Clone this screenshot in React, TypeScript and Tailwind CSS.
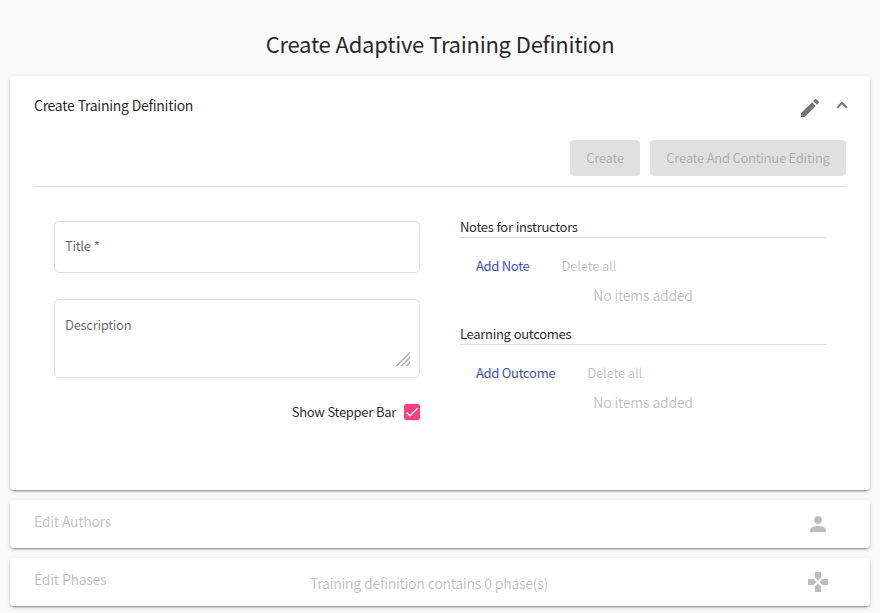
import React from 'react';

const cardShadow =
  'shadow-[0_3px_1px_-2px_rgba(0,0,0,0.2),0_2px_2px_0_rgba(0,0,0,0.14),0_1px_5px_0_rgba(0,0,0,0.12)]';

function Panel({ className, children }: { className: string; children: React.ReactNode }) {
  return <section className={`rounded bg-white ${cardShadow} ${className}`}>{children}</section>;
}

function Icon({ d, className }: { d: string; className: string }) {
  return (
    <svg viewBox="0 0 24 24" className={`size-6 shrink-0 fill-current ${className}`}>
      <path d={d} />
    </svg>
  );
}

const editPath =
  'M3 17.25V21h3.75L17.81 9.94l-3.75-3.75L3 17.25zM20.71 7.04c.39-.39.39-1.02 0-1.41l-2.34-2.34a.9959.9959 0 0 0-1.41 0l-1.83 1.83 3.75 3.75 1.83-1.83z';
const personPath =
  'M12 12c2.21 0 4-1.79 4-4s-1.79-4-4-4-4 1.79-4 4 1.79 4 4 4zm0 2c-2.67 0-8 1.34-8 4v2h16v-2c0-2.66-5.33-4-8-4z';
const gamesPath =
  'M15 7.5V2H9v5.5l3 3 3-3zM7.5 9H2v6h5.5l3-3-3-3zM9 16.5V22h6v-5.5l-3-3-3 3zM16.5 9l-3 3 3 3H22V9h-5.5z';

function ItemList({ title, action }: { title: string; action: string }) {
  return (
    <div className="h-[107px]">
      <h3 className="h-[21px] border-b border-black/12 text-[13px] leading-5">{title}</h3>
      <div className="mt-[10px] flex h-9 items-center gap-8 pl-4 text-[13px]">
        <button className="text-[#3f51b5]">{action}</button>
        <button className="tracking-[-0.18px] text-black/26" disabled>
          Delete all
        </button>
      </div>
      <p className="-mt-px text-center text-[14px] leading-6 text-black/26">No items added</p>
    </div>
  );
}

export default function App() {
  return (
    <main className="h-[613px] overflow-hidden bg-[#fafafa] px-[10px] font-['Noto_Sans_CJK_SC','Noto_Sans',sans-serif] tracking-[-0.3px] [word-spacing:0.4px] text-black/87">
      <h1 className="h-[76px] pt-[27px] text-center text-[22px] leading-8 tracking-[-0.26px]">Create Adaptive Training Definition</h1>

      <Panel className="h-[414px] px-6">
        <header className="flex h-16 justify-between">
          <h2 className="pt-[17px] text-[14px] leading-6">Create Training Definition</h2>
          <div className="flex pt-5">
            <Icon d={editPath} className="text-black/54" />
            <svg viewBox="0 0 12 8" className="ml-[14px] -mr-[2px] mt-[5px] h-2 w-3 fill-none stroke-black/54 stroke-2">
              <path d="M1.1 6.7 6 1.8l4.9 4.9" />
            </svg>
          </div>
        </header>
        <div className="flex h-[47px] justify-end gap-[10px] border-b border-black/12 text-[13px] tracking-[-0.26px] text-black/26">
          <button className="h-9 w-[70px] rounded bg-black/12" disabled>
            Create
          </button>
          <button className="h-9 w-[196px] rounded bg-black/12" disabled>
            Create And Continue Editing
          </button>
        </div>
        <div className="flex justify-between px-5">
          <form className="w-[366px] pt-[34px] text-[13px] leading-5">
            <div className="h-[52px] rounded-[5px] border border-black/12 px-[10px] pt-[14px] text-black/60">
              Title *
            </div>
            <div className="mt-[26px] flex h-[79px] justify-between rounded-[5px] border border-black/12 pt-[15px] pr-[9px] pl-[10px] text-black/60">
              <span>Description</span>
              <svg viewBox="0 0 14 14" className="mt-[37px] size-[14px] fill-none stroke-[#b0b0b0] stroke-[1.5]">
                <path d="M0 14.5 14.5 0M5 14.5 14.5 5M10 14.5l4.5-4.5" />
              </svg>
            </div>
            <div className="mt-6 flex items-center justify-end gap-2">
              <span>Show Stepper Bar</span>
              <svg viewBox="0 0 24 24" className="size-4 rounded-[2px] bg-[#ff4081] fill-none stroke-[#fafafa] stroke-[2.13]">
                <path d="M4.1 12.7 9 17.6 20.3 6.3" />
              </svg>
            </div>
          </form>
          <div className="w-[366px] pt-[30px]">
            <ItemList title="Notes for instructors" action="Add Note" />
            <ItemList title="Learning outcomes" action="Add Outcome" />
          </div>
        </div>
      </Panel>

      <Panel className="mt-[10px] flex h-12 justify-between px-6 text-black/26">
        <h2 className="pt-[9px] text-[14px] leading-6">Edit Authors</h2>
        <Icon d={personPath} className="mt-3 mr-4" />
      </Panel>

      <Panel className="mt-[10px] flex h-12 justify-between px-6 text-[14px] leading-6 text-black/26">
        <h2 className="w-[276px] pt-[9px]">Edit Phases</h2>
        <p className="flex-1 pt-[13px]">Training definition contains 0 phase(s)</p>
        <Icon d={gamesPath} className="mt-3 mr-4" />
      </Panel>
    </main>
  );
}
